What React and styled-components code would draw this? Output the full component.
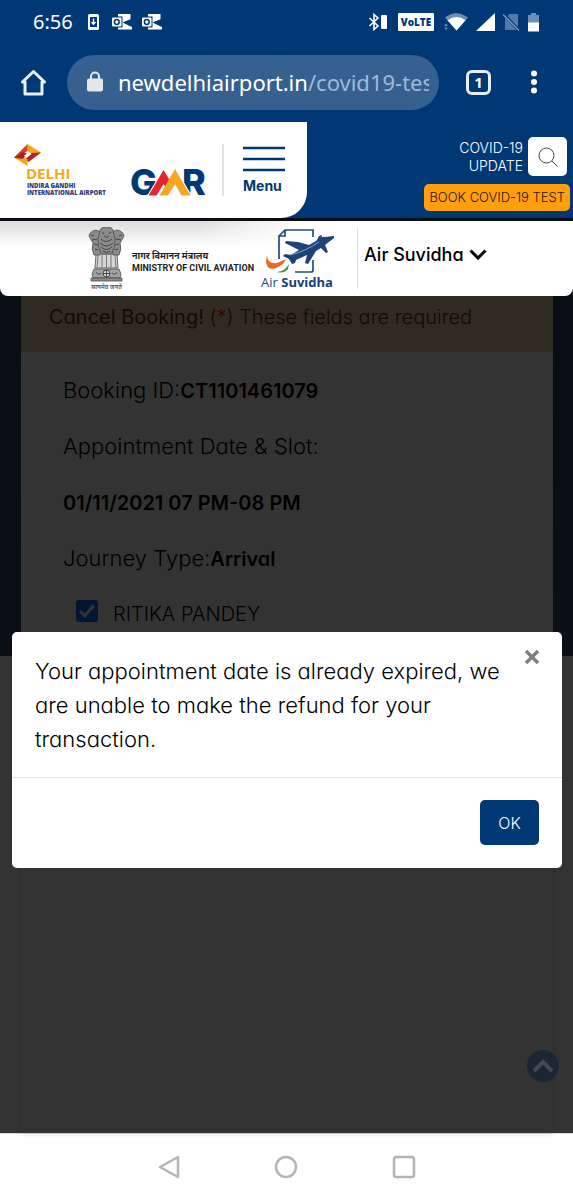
import React from "react";
import styled, { createGlobalStyle } from "styled-components";

const navy = "#003875";

const GlobalStyle = createGlobalStyle`
  *, *::before, *::after { box-sizing: border-box; }
  body {
    margin: 0;
    background: #fff;
    font-family: Inter, "Noto Sans", sans-serif;
    font-feature-settings: "cv11";
    font-weight: 300;
    color: #000;
  }
  button { font: inherit; font-feature-settings: inherit; border: 0; padding: 0; background: none; color: inherit; }
  a { color: inherit; text-decoration: none; }
  p, h2 { margin: 0; }
  svg { display: block; flex: none; }
`;

const Screen = styled.div`
  display: flex;
  flex-direction: column;
  min-height: 100vh;
`;

/* ---- Phone status bar ---- */
const StatusBar = styled.div`
  display: flex;
  align-items: center;
  justify-content: space-between;
  height: 44px;
  padding: 0 34px 0 33px;
  background: ${navy};
  color: #fff;
`;
const StatusGroup = styled.div`
  display: flex;
  align-items: center;
  gap: ${(p) => p.$gap}px;
`;
const Clock = styled.span`
  margin-right: 5px;
  font: 400 20px/28px "Noto Sans", sans-serif;
`;
const VolteBadge = styled.span`
  width: 36px;
  height: 18px;
  margin: 0 2px;
  border-radius: 1px;
  background: #fff;
  color: ${navy};
  font: 800 10px/18px "Open Sans", sans-serif;
  text-align: center;
`;

/* ---- Browser bar ---- */
const BrowserBar = styled.div`
  display: flex;
  align-items: center;
  height: 78px;
  padding: 0 36px 2px 20px;
  background: ${navy};
`;
const IconButton = styled.button`
  display: grid;
  place-items: center;
`;
const AddressBar = styled.div`
  display: flex;
  align-items: center;
  flex: 1;
  min-width: 0;
  gap: 15px;
  height: 55px;
  margin: 0 27px 0 20px;
  padding: 0 10px 0 20px;
  border-radius: 28px;
  background: #36608f;
`;
const Url = styled.span`
  flex: 1;
  min-width: 0;
  overflow: hidden;
  white-space: nowrap;
  color: #fff;
  font: 400 22px/32px "Noto Sans", sans-serif;
`;
const UrlPath = styled.span`
  color: #9dbad9;
`;
const TabsButton = styled.button`
  width: 25px;
  height: 25px;
  margin-right: 40px;
  && {
    border: 3px solid #e6effa;
    border-radius: 6px;
    color: #fff;
    font: 700 15px/19px "Noto Sans", sans-serif;
  }
`;

/* ---- Site header ---- */
const SiteHeader = styled.header`
  display: flex;
  justify-content: space-between;
  height: 99px;
  border-bottom: 3px solid #0b0d12;
  background: ${navy};
`;
const BrandPanel = styled.div`
  display: flex;
  align-items: center;
  width: 307px;
  border-bottom-right-radius: 26px;
  background: #fff;
`;
const BrandLink = styled.a`
  display: flex;
  flex: 1;
  align-items: center;
  height: 52px;
  border-right: 2px solid #e3e3e6;
`;
const MenuButton = styled.button`
  display: flex;
  flex-direction: column;
  align-items: flex-start;
  gap: 4px;
  margin: 2px 22px 0 19px;
  && {
    color: ${navy};
    font-family: Inter, sans-serif;
    font-size: 14px;
    font-weight: 700;
    line-height: 20px;
  }
`;
const HeaderTools = styled.div`
  display: flex;
  flex-direction: column;
  align-items: flex-end;
  gap: 8px;
  padding: 15px 3px 0 0;
`;
const ToolsRow = styled.div`
  display: flex;
  gap: 5px;
  padding-right: 3px;
`;
const CovidUpdate = styled.a`
  width: 72px;
  color: #fff;
  font-size: 14px;
  line-height: 18px;
  text-align: right;
  padding-top: 2px;
`;
const SearchButton = styled.button`
  display: grid;
  place-items: center;
  width: 39px;
  height: 39px;
  && {
    border-radius: 5px;
    background: #fff;
  }
`;
const BookLink = styled.a`
  display: block;
  height: 27px;
  padding: 0 5px;
  border-radius: 5px;
  background: #ff9f0f;
  color: #1d1505;
  font-size: 13px;
  line-height: 27px;
  white-space: nowrap;
`;

/* ---- Ministry bar ---- */
const MinistryBar = styled.div`
  position: relative;
  z-index: 1;
  display: flex;
  align-items: center;
  height: 75px;
  margin-bottom: -8px;
  padding-left: 88px;
  border-radius: 0 0 8px 8px;
  background:
    linear-gradient(to right, transparent 200px, #fff 300px),
    linear-gradient(#dcdcde, #fff 26px);
`;
const Emblem = styled.div`
  display: flex;
  flex-direction: column;
  align-items: center;
  width: 37px;
`;
const Motto = styled.span`
  color: #555;
  font: 600 6px/8px "Noto Sans", sans-serif;
  white-space: nowrap;
`;
const MinistryName = styled.div`
  width: 120px;
  margin-left: 7px;
  padding-top: 6px;
  color: #222;
  font: 700 9px/12px Roboto, "Noto Sans", sans-serif;
  white-space: nowrap;
`;
const SuvidhaLogo = styled.a`
  display: flex;
  flex-direction: column;
  align-items: center;
  width: 74px;
  margin: 0 23px 0 8px;
  color: #1d4b87;
  font: 400 13px/14px "Open Sans", sans-serif;
  white-space: nowrap;
  b { font-weight: 700; color: #143f7c; }
`;
const SuvidhaMenu = styled.button`
  display: flex;
  align-items: center;
  height: 61px;
  gap: 5px;
  && {
    padding: 0 0 8px 6px;
    border-left: 1px solid #dedede;
    font-size: 18px;
    font-weight: 500;
  }
`;

/* ---- Page under the dialog ---- */
const PageArea = styled.main`
  position: relative;
  flex: 1;
  display: flex;
  flex-direction: column;
  padding: 8px 20px 0 21px;
  background: linear-gradient(#32486e, #364d78) top / 100% 368px no-repeat #fff;
`;
const BookingCard = styled.section`
  flex: 1;
  background: #fff;
  box-shadow: 0 0 6px rgba(0, 0, 0, 0.2);
`;
const CardTitle = styled.div`
  height: 56px;
  padding: 4px 28px 0;
  background: #f0d8a0;
  color: #4a3d1c;
  font-size: 20px;
  line-height: 34px;
  white-space: nowrap;
`;
const Required = styled.span`
  color: #f00;
`;
const Details = styled.div`
  padding: 10px 42px;
  font-size: 22px;
  line-height: 56px;
  white-space: nowrap;
  b { font-size: 20px; font-weight: 600; line-height: 20px; }
`;
const Passenger = styled.label`
  display: flex;
  align-items: center;
  gap: 15px;
  padding-left: 13px;
  font-size: 20px;
`;
const PassengerCheck = styled.input`
  appearance: none;
  width: 22px;
  height: 22px;
  margin: 0 0 6px;
  border-radius: 3px;
  background: #0a6cff;
  display: grid;
  place-items: center;
  &::after {
    content: "";
    width: 8px;
    height: 15px;
    margin-bottom: 4px;
    border: solid #fff;
    border-width: 0 3px 3px 0;
    transform: rotate(42deg);
  }
`;

/* ---- Dialog ---- */
const Backdrop = styled.div`
  position: absolute;
  inset: 0;
  padding: 344px 11px 0 12px;
  background: rgba(0, 0, 0, 0.8);
`;
const Dialog = styled.div`
  border-radius: 5px;
  background: #fff;
`;
const DialogBody = styled.div`
  display: flex;
  align-items: flex-start;
  padding: 17px 22px 21px 23px;
  font-size: 22px;
  line-height: 34px;
`;
const DialogText = styled.p`
  flex: 1;
  padding: 5px 24px 0 0;
`;
const CloseButton = styled.button`
  display: grid;
  place-items: center;
  width: 16px;
  height: 16px;
`;
const DialogFooter = styled.div`
  display: flex;
  justify-content: flex-end;
  padding: 22px 23px 23px;
  border-top: 1px solid #e2e2e5;
`;
const OkButton = styled.button`
  width: 59px;
  height: 45px;
  && {
    border-radius: 5px;
    background: ${navy};
    color: #fff;
    font-size: 16px;
  }
`;
const TopButton = styled.button`
  position: absolute;
  right: 14px;
  bottom: 51px;
  display: grid;
  place-items: center;
  width: 32px;
  height: 32px;
  && {
    border-radius: 50%;
    background: #1b2633;
  }
`;

/* ---- Phone navigation ---- */
const PhoneNav = styled.nav`
  display: flex;
  align-items: center;
  justify-content: center;
  gap: 94px;
  height: 67px;
  border-top: 1px solid #d9d9d9;
  background: #fff;
`;

const DownloadIcon = () => (
  <svg width="14" height="16" viewBox="0 0 14 16">
    <rect width="11" height="16" rx="1.5" fill="#fff" />
    <rect x="2" y="3" width="7" height="10" fill={navy} />
    <path d="M5.500 4.500v5M3.500 8l2 2.200 2-2.200" stroke="#fff" strokeWidth="1.300" fill="none" />
  </svg>
);
const OutlookIcon = () => (
  <svg width="20" height="16" viewBox="0 0 20 16">
    <path d="M6 0h12.500v5.500L12 8l8 4v3.500H6z" fill="#fff" />
    <path d="M20 5.800L12.500 8.500 20 12.300" stroke={navy} strokeWidth="1.500" fill="none" />
    <rect x="-1" y="2.500" width="11.500" height="11" fill={navy} />
    <rect x="0" y="3.500" width="9.500" height="9" rx="1" fill="#fff" />
    <circle cx="4.800" cy="8" r="2.400" fill="none" stroke={navy} strokeWidth="1.500" />
  </svg>
);
const BluetoothIcon = () => (
  <svg width="20" height="18" viewBox="0 0 20 18">
    <path d="M1.500 5l8.500 8-4 3.500V1.500L10 5l-8.500 8" fill="none" stroke="#fff" strokeWidth="1.600" />
    <rect x="13" y="2" width="6" height="14" rx="1" fill="#fff" />
  </svg>
);
const WifiIcon = () => (
  <svg width="24" height="18" viewBox="0 0 24 18">
    <path d="M12.500 17.500L1 4.500Q12-4 24 4.500z" fill="#6c8fb6" />
    <path d="M12.500 17.500L3.500 7.200Q12.500 1 21.500 7.200z" fill="#fff" />
    <path d="M0 13l2-2.500L4 13zM0 14.500h4L2 17z" fill="#6c8fb6" />
  </svg>
);
const SignalIcon = () => (
  <svg width="19" height="18" viewBox="0 0 19 18"><path d="M19 0v18H0z" fill="#fff" /></svg>
);
const NoSimIcon = () => (
  <svg width="17" height="18" viewBox="0 0 17 18">
    <path d="M6.500 1H15v16H2V5.500z" fill="#507bab" />
    <path d="M0 .5l16 17" stroke={navy} strokeWidth="3" />
    <path d="M0 1.500l16 16" stroke="#7b9bc0" strokeWidth="1.300" />
  </svg>
);
const BatteryIcon = () => (
  <svg width="11" height="19" viewBox="0 0 11 19">
    <path d="M3 0h5v2h3v8H0V2h3z" fill="#6c8fb6" />
    <path d="M0 9.500h11V18.500H0z" fill="#fff" />
  </svg>
);

const AirportLogo = () => (
  <svg width="220" height="76" viewBox="0 -4 220 76" role="img" aria-label="Delhi Indira Gandhi International Airport, GMR">
    <path d="M27.500 8L41 16.500 36 20.500 27.500 15z" fill="#f3a81c" />
    <path d="M41 16.500L28.500 26 24.500 23.500 31.500 17z" fill="#b3202c" />
    <path d="M27.500 8v7L19.500 20.500 14 21.500z" fill="#d9402a" />
    <path d="M14 21.500L27.500 30V23L22 20z" fill="#f3a81c" />
    <path d="M14 21.500l9-5.500 4.500 2-5 5z" fill="#a91f2c" />
    <path d="M24 19.500l5-3 2.500 1.500-5 4z" fill="#fff" />
    <text x="26" y="43" fontFamily="Open Sans, sans-serif" fontSize="15" fontWeight="700" fill="#f5a81c">DELHI</text>
    <text x="27" y="52" fontFamily="Open Sans, sans-serif" fontSize="6" fontWeight="800" fill="#2e3b7c">INDIRA GANDHI</text>
    <text x="27" y="59" fontFamily="Open Sans, sans-serif" fontSize="6" fontWeight="800" fill="#2e3b7c">INTERNATIONAL AIRPORT</text>
    <text x="130" y="59" fontFamily="Inter, sans-serif" fontSize="36" fontWeight="800" fill={navy}>G</text>
    <text x="182" y="59" fontFamily="Inter, sans-serif" fontSize="36" fontWeight="800" fill={navy}>R</text>
    <path d="M147 60L163.500 32 170 42 175 31 192 60z" fill="#fff" />
    <path d="M148.500 59.500L163.500 34 172 48l-4 7-4.500-7-7 11.500z" fill="#e8252f" />
    <path d="M159.500 59.500L175 33 190.500 59.500h-9L175 48l-7 11.500z" fill="#f8a81e" />
  </svg>
);

const EmblemDrawing = () => (
  <svg width="37" height="56" viewBox="0 0 37 56">
    <g fill="#8b8b8b" stroke="#4b4b4b" strokeWidth=".8">
      <path d="M8 27l-1 14h23l-1-14z" fill="#d6d6d6" />
      <path d="M1 9q1-5 7-6l5 2-2 9q3 6 1 14H6Q3 22 5 16z" />
      <path d="M36 9q-1-5-7-6l-5 2 2 9q-3 6-1 14h6q3-6 1-12z" />
      <path d="M12 3q1-3 6.500-3T25 3l2 9q0 10-4 15h-9q-4-5-4-15z" />
      <path d="M6 42h25l2 5-1 4H5l-1-4z" fill="#a2a2a2" />
      <path d="M3 51h31v3H3z" />
    </g>
    <g fill="none" stroke="#444" strokeWidth="1">
      <path d="M14 5l2 2M23 5l-2 2M16 9q2.500 3 5 0M13 12q5 5 11 0M12 16q6 6 13 0M13 20q5 5 11 0M15 24q4 3 7 0" />
      <path d="M3 8l3 1M34 8l-3 1M4 13l5-1M33 13l-5-1M6 17l4 1M31 17l-4 1M7 22l3 1M30 22l-3 1" />
      <path d="M10 28l-1 13M14 28v13M18.500 28v13M23 28v13M27 28l1 13" stroke="#777" />
      <circle cx="18.500" cy="46.500" r="3.500" fill="#ddd" />
      <path d="M18.500 43v7M15 46.500h7M8 45q3 4 5 1M24 46q3 3 5-1" />
    </g>
  </svg>
);

const PlaneDrawing = () => (
  <svg width="74" height="46" viewBox="0 0 74 46">
    <path d="M19 30V7l6-6h28v7M53 31v10q0 2-2 2H35M25 1v6h-6" fill="none" stroke="#1e4c87" strokeWidth="1.700" />
    <path d="M7 26q1 14 19 4l-3 5Q7 46 6 32z" fill="#f26522" />
    <path d="M17 43q8-1 12-8l-1 5q-4 5-11 3z" fill="#2e9e4f" />
    <path d="M65 8q-3-1-9 4l-7 4-11-3-12-1-1 2 14 7-8 5-6-1-2 2 6 3 3 5 3-1 1-3 11-5-2 8 3 1 8-13 5-3 5 5 2-1-3-7 9-7q2-1 1-2z" fill="#1e4379" />
    <path d="M56 13l3-6 3-1-1 6z" fill="#1e4379" />
    <path d="M30 26q14-3 29-13" stroke="#7ea4cf" strokeWidth="1" fill="none" />
  </svg>
);

export default function App() {
  return (
    <Screen>
      <GlobalStyle />
      <StatusBar>
        <StatusGroup $gap={10}>
          <Clock>6:56</Clock>
          <DownloadIcon />
          <OutlookIcon />
          <OutlookIcon />
        </StatusGroup>
        <StatusGroup $gap={8}>
          <BluetoothIcon />
          <VolteBadge>VoLTE</VolteBadge>
          <WifiIcon />
          <SignalIcon />
          <NoSimIcon />
          <BatteryIcon />
        </StatusGroup>
      </StatusBar>

      <BrowserBar>
        <IconButton aria-label="Home">
          <svg width="27" height="27" viewBox="0 0 27 27" fill="none" stroke="#eaf1fa" strokeWidth="3" strokeLinejoin="round">
            <path d="M5 13H2.500L13.500 2.500 24.500 13H22v12H5z" />
          </svg>
        </IconButton>
        <AddressBar>
          <svg width="16" height="22" viewBox="0 0 16 22">
            <path d="M4 9V5.500a4 4 0 0 1 8 0V9" fill="none" stroke="#e6e6e6" strokeWidth="2" />
            <rect y="7.500" width="16" height="13" rx="2" fill="#e6e6e6" />
          </svg>
          <Url>newdelhiairport.in<UrlPath>/covid19-tes</UrlPath></Url>
        </AddressBar>
        <TabsButton aria-label="1 open tab">1</TabsButton>
        <IconButton aria-label="More">
          <svg width="6" height="24" viewBox="0 0 6 24" fill="#fff">
            <circle cx="3" cy="3.500" r="3" /><circle cx="3" cy="12" r="3" /><circle cx="3" cy="20.500" r="3" />
          </svg>
        </IconButton>
      </BrowserBar>

      <SiteHeader>
        <BrandPanel>
          <BrandLink href="#home"><AirportLogo /></BrandLink>
          <MenuButton>
            <svg width="42" height="26" viewBox="0 0 42 26" stroke={navy} strokeWidth="2.500">
              <path d="M0 2h42M0 13h42M0 24h42" />
            </svg>
            Menu
          </MenuButton>
        </BrandPanel>
        <HeaderTools>
          <ToolsRow>
            <CovidUpdate href="#covid">COVID-19 UPDATE</CovidUpdate>
            <SearchButton aria-label="Search">
              <svg width="20" height="20" viewBox="0 0 20 20" fill="none" stroke="#444" strokeWidth="1">
                <circle cx="8.500" cy="8.500" r="7.500" /><path d="M14 14l5.500 5.500" />
              </svg>
            </SearchButton>
          </ToolsRow>
          <BookLink href="#book">BOOK COVID-19 TEST</BookLink>
        </HeaderTools>
      </SiteHeader>

      <MinistryBar>
        <Emblem>
          <EmblemDrawing />
          <Motto>सत्यमेव जयते</Motto>
        </Emblem>
        <MinistryName>
          <div>नागर विमानन मंत्रालय</div>
          <div>MINISTRY OF CIVIL AVIATION</div>
        </MinistryName>
        <SuvidhaLogo href="#suvidha">
          <PlaneDrawing />
          <span>Air <b>Suvidha</b></span>
        </SuvidhaLogo>
        <SuvidhaMenu>
          Air Suvidha
          <svg width="18" height="11" viewBox="0 0 18 11" fill="none" stroke="#000" strokeWidth="3">
            <path d="M1.500 1.500L9 9l7.500-7.500" />
          </svg>
        </SuvidhaMenu>
      </MinistryBar>

      <PageArea>
        <BookingCard>
          <CardTitle>
            <strong>Cancel Booking!</strong> (<Required>*</Required>) These fields are required
          </CardTitle>
          <Details>
            <p>Booking ID:<b>CT1101461079</b></p>
            <p>Appointment Date &amp; Slot:</p>
            <p><b>01/11/2021 07 PM-08 PM</b></p>
            <p>Journey Type:<b>Arrival</b></p>
            <Passenger>
              <PassengerCheck type="checkbox" defaultChecked />
              RITIKA PANDEY
            </Passenger>
          </Details>
        </BookingCard>
        <Backdrop>
          <Dialog role="dialog" aria-modal="true" aria-label="Refund notice">
            <DialogBody>
              <DialogText>
                Your appointment date is already expired, we are unable to make the refund for your transaction.
              </DialogText>
              <CloseButton aria-label="Close">
                <svg width="16" height="16" viewBox="0 0 16 16" stroke="#808080" strokeWidth="3.500">
                  <path d="M2 2l12 12M14 2L2 14" />
                </svg>
              </CloseButton>
            </DialogBody>
            <DialogFooter>
              <OkButton>OK</OkButton>
            </DialogFooter>
          </Dialog>
          <TopButton aria-label="Back to top">
            <svg width="22" height="14" viewBox="0 0 22 14" fill="none" stroke="#42494f" strokeWidth="4">
              <path d="M2 12l9-9 9 9" />
            </svg>
          </TopButton>
        </Backdrop>
      </PageArea>

      <PhoneNav>
        <IconButton aria-label="Back">
          <svg width="22" height="24" viewBox="0 0 22 24" fill="none" stroke="#b5b5b5" strokeWidth="2.500" strokeLinejoin="round">
            <path d="M20 2v20L2 12z" />
          </svg>
        </IconButton>
        <IconButton aria-label="Home screen">
          <svg width="24" height="24" viewBox="0 0 24 24" fill="none" stroke="#b5b5b5" strokeWidth="2.500"><circle cx="12" cy="12" r="10" /></svg>
        </IconButton>
        <IconButton aria-label="Recent apps">
          <svg width="24" height="24" viewBox="0 0 24 24" fill="none" stroke="#b5b5b5" strokeWidth="2.500"><rect x="2" y="2" width="20" height="20" rx="2" /></svg>
        </IconButton>
      </PhoneNav>
    </Screen>
  );
}
